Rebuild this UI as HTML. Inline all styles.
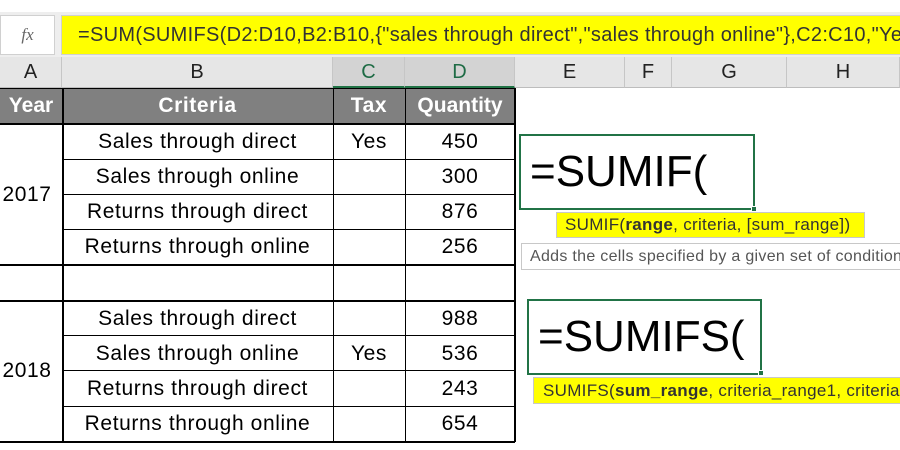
<!DOCTYPE html>
<html><head><meta charset="utf-8"><style>
*{margin:0;padding:0;box-sizing:border-box}
body{width:900px;height:450px;background:#fff;position:relative;overflow:hidden;font-family:"Liberation Sans",sans-serif;color:#000}
.a{position:absolute}
.ln{position:absolute;background:#000}
.t{position:absolute;font-size:21px;letter-spacing:0.6px;text-align:center;line-height:35px;white-space:nowrap}
.ch{position:absolute;top:57px;height:31px;background:#e6e6e6;border-right:1px solid #c6c6c6;border-bottom:1px solid #bdbdbd;font-size:20px;text-align:center;line-height:30px;color:#222}
</style></head><body>
<div class="a" style="left:0;top:12px;width:900px;height:45px;background:#eeeeee"></div>
<div class="a" style="left:0;top:15px;width:55px;height:40px;background:#fff;border:1px solid #d0d0d0;font-family:'Liberation Serif',serif;font-style:italic;color:#666;font-size:17px;text-align:center;line-height:38px">fx</div>
<div class="a" style="left:61px;top:15px;width:845px;height:40px;background:#ffff00;border:1px solid #d0d0d0;font-size:20px;letter-spacing:0.3px;line-height:38px;padding-left:16px;white-space:nowrap;color:#333">=SUM(SUMIFS(D2:D10,B2:B10,{"sales through direct","sales through online"},C2:C10,"Yes"))</div>
<div class="ch" style="left:0;width:62px">A</div>
<div class="ch" style="left:62px;width:271px">B</div>
<div class="ch" style="left:333px;width:72px;background:#d3d3d3;color:#1e6b45;border-bottom:2px solid #217346">C</div>
<div class="ch" style="left:405px;width:110px;background:#d3d3d3;color:#1e6b45;border-bottom:2px solid #217346">D</div>
<div class="ch" style="left:515px;width:110px">E</div>
<div class="ch" style="left:625px;width:47px">F</div>
<div class="ch" style="left:672px;width:115px">G</div>
<div class="ch" style="left:787px;width:113px">H</div>
<div class="a" style="left:0;top:88px;width:515px;height:36px;background:#808080"></div>
<div class="t" style="left:0;top:88px;width:62px;color:#fff;font-weight:bold;line-height:36px;letter-spacing:0">Year</div>
<div class="t" style="left:62px;top:88px;width:271px;color:#fff;font-weight:bold;line-height:36px">Criteria</div>
<div class="t" style="left:333px;top:88px;width:72px;color:#fff;font-weight:bold;line-height:36px">Tax</div>
<div class="t" style="left:405px;top:88px;width:110px;color:#fff;font-weight:bold;line-height:36px;letter-spacing:0">Quantity</div>
<div class="ln" style="left:0;top:88px;width:515px;height:1px"></div>
<div class="ln" style="left:62px;top:88px;width:2px;height:354px"></div>
<div class="ln" style="left:333px;top:88px;width:1px;height:354px"></div>
<div class="ln" style="left:405px;top:88px;width:1px;height:354px"></div>
<div class="ln" style="left:514px;top:88px;width:2px;height:354px"></div>
<div class="ln" style="left:0;top:123px;width:515px;height:2px"></div>
<div class="ln" style="left:62px;top:159px;width:453px;height:1px"></div>
<div class="ln" style="left:62px;top:194px;width:453px;height:1px"></div>
<div class="ln" style="left:62px;top:229px;width:453px;height:1px"></div>
<div class="ln" style="left:0;top:264px;width:515px;height:2px"></div>
<div class="ln" style="left:0;top:300px;width:515px;height:2px"></div>
<div class="ln" style="left:62px;top:335px;width:453px;height:1px"></div>
<div class="ln" style="left:62px;top:370px;width:453px;height:1px"></div>
<div class="ln" style="left:62px;top:406px;width:453px;height:1px"></div>
<div class="ln" style="left:0;top:441px;width:515px;height:2px"></div>
<div class="t" style="left:-4px;top:177px;width:62px">2017</div>
<div class="t" style="left:-4px;top:353px;width:62px">2018</div>
<div class="t" style="left:62px;top:124px;width:271px">Sales through direct</div>
<div class="t" style="left:62px;top:159px;width:271px">Sales through online</div>
<div class="t" style="left:62px;top:194px;width:271px">Returns through direct</div>
<div class="t" style="left:62px;top:229px;width:271px">Returns through online</div>
<div class="t" style="left:62px;top:301px;width:271px">Sales through direct</div>
<div class="t" style="left:62px;top:336px;width:271px">Sales through online</div>
<div class="t" style="left:62px;top:371px;width:271px">Returns through direct</div>
<div class="t" style="left:62px;top:406px;width:271px">Returns through online</div>
<div class="t" style="left:333px;top:124px;width:72px">Yes</div>
<div class="t" style="left:333px;top:336px;width:72px">Yes</div>
<div class="t" style="left:405px;top:124px;width:110px">450</div>
<div class="t" style="left:405px;top:159px;width:110px">300</div>
<div class="t" style="left:405px;top:194px;width:110px">876</div>
<div class="t" style="left:405px;top:229px;width:110px">256</div>
<div class="t" style="left:405px;top:301px;width:110px">988</div>
<div class="t" style="left:405px;top:336px;width:110px">536</div>
<div class="t" style="left:405px;top:371px;width:110px">243</div>
<div class="t" style="left:405px;top:406px;width:110px">654</div>
<div class="a" style="left:519px;top:134px;width:236px;height:76px;border:2px solid #217346;font-size:44px;line-height:72px;padding-left:9px;white-space:nowrap">=SUMIF(</div>
<div class="a" style="left:751px;top:206px;width:6px;height:6px;background:#217346;border:1px solid #fff"></div>
<div class="a" style="left:556px;top:212px;width:309px;height:26px;background:#ffff00;border:1px solid #c8c8c8;font-size:17px;letter-spacing:0.3px;line-height:24px;padding-left:8px;color:#333;white-space:nowrap;overflow:hidden">SUMIF(<b>range</b>, criteria, [sum_range])</div>
<div class="a" style="left:521px;top:243px;width:390px;height:27px;background:#fff;border:1px solid #c8c8c8;font-size:16px;letter-spacing:0.3px;line-height:25px;padding-left:8px;color:#555;white-space:nowrap">Adds the cells specified by a given set of conditions</div>
<div class="a" style="left:527px;top:299px;width:235px;height:76px;border:2px solid #217346;font-size:44px;line-height:72px;padding-left:9px;white-space:nowrap">=SUMIFS(</div>
<div class="a" style="left:758px;top:370px;width:6px;height:6px;background:#217346;border:1px solid #fff"></div>
<div class="a" style="left:533px;top:377px;width:380px;height:27px;background:#ffff00;border:1px solid #c8c8c8;font-size:17px;letter-spacing:0.3px;line-height:25px;padding-left:9px;color:#333;white-space:nowrap">SUMIFS(<b>sum_range</b>, criteria_range1, criteria1</div>
</body></html>
